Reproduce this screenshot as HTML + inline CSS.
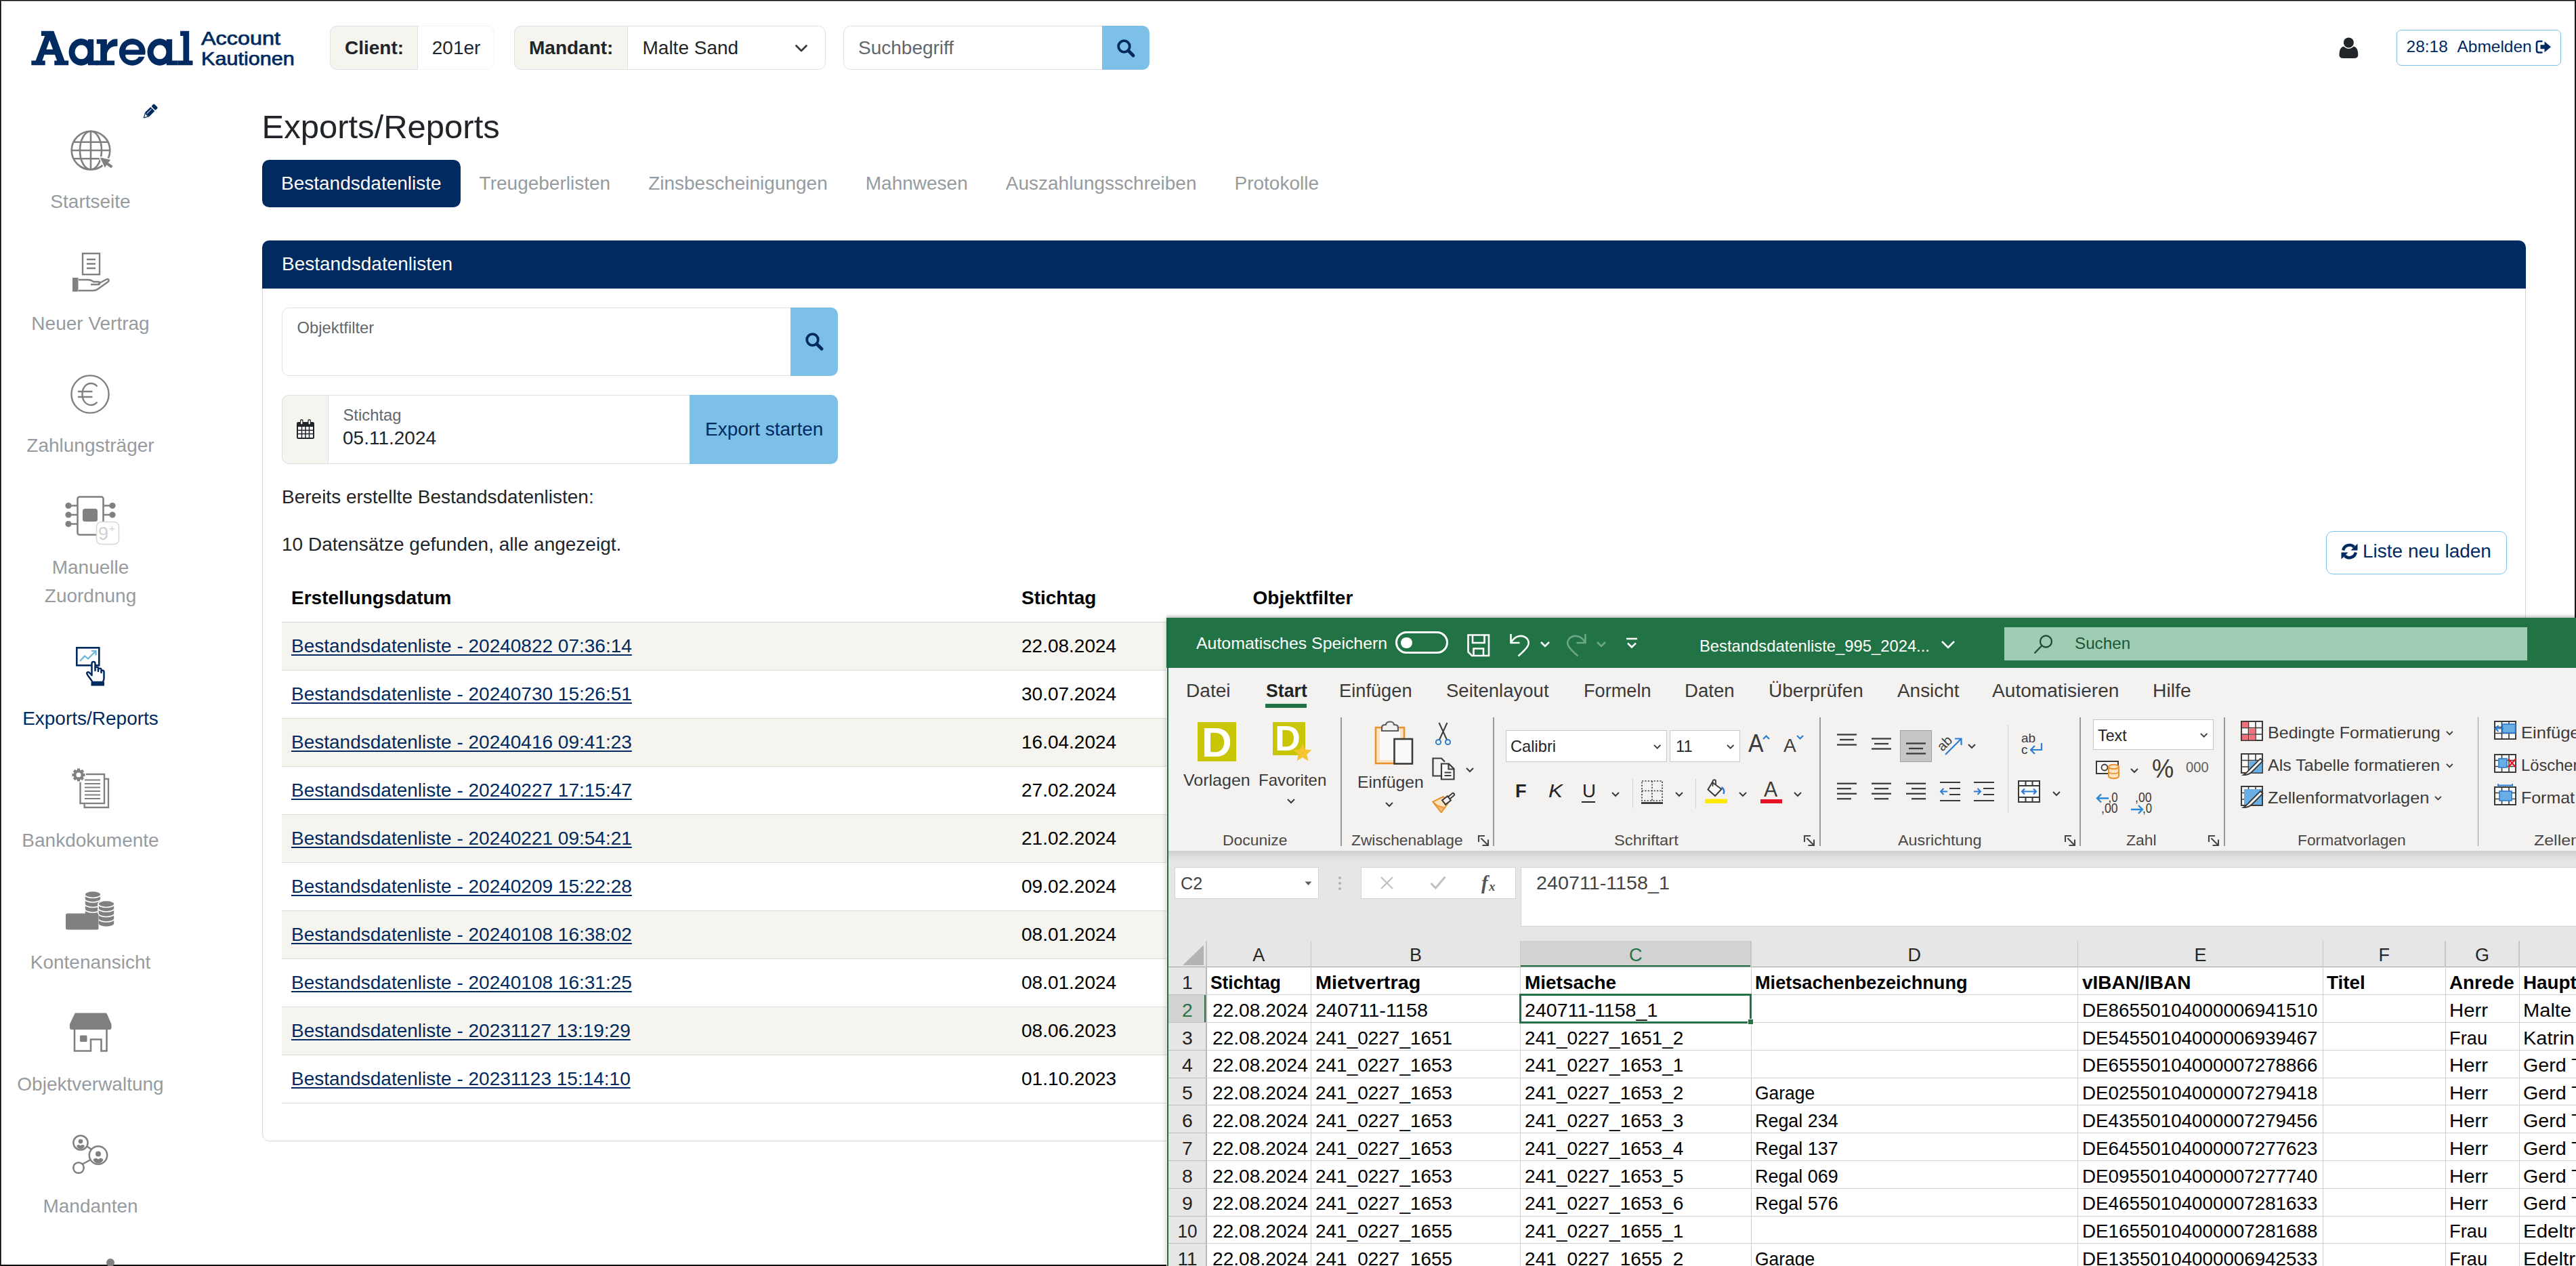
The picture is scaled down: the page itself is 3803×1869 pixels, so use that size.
<!DOCTYPE html>
<html lang="de"><head><meta charset="utf-8"><title>Exports/Reports</title>
<style>
html,body{margin:0;padding:0;background:#fff;}
body{width:3803px;height:1869px;}
#root{position:relative;width:3803px;height:1869px;overflow:hidden;background:#fff;font-family:"Liberation Sans",sans-serif;}
.b{position:absolute;box-sizing:border-box;display:block;}
.t{position:absolute;white-space:nowrap;line-height:1;font-family:"Liberation Sans",sans-serif;}
svg{overflow:visible;}
a{color:inherit;}
</style></head><body><div id="root">
<div class="b" style="left:0.00px;top:0.00px;width:3803.00px;height:2.00px;background:linear-gradient(#000 50%,#8c8c8c 50%);"></div>
<div class="b" style="left:0.00px;top:0.00px;width:2.00px;height:1869.00px;background:linear-gradient(90deg,#000 50%,#5a5a5a 50%);"></div>
<div class="b" style="left:3800.50px;top:0.00px;width:2.50px;height:912.00px;background:#1a1a1a;"></div>
<div class="b" style="left:0.00px;top:1866.50px;width:1723.00px;height:2.50px;background:#0a0a0a;"></div>
<svg class="b" style="left:40.00px;top:40.00px;" width="250.00" height="62.00" viewBox="0 0 2576 639">
<g fill="#002a60" fill-rule="evenodd">
<path d="M65,580V510H130L270,135H215V60H405L570,510H630V580H415V510H455L422,420H262L232,510H275V580Z M292,340H393L342,200Z"/>
<path d="M822,175a188,205 0 1 0 0.1,0Z M825,272a98,108 0 1 1 -0.1,0Z"/>
<path d="M925,185H1012V510H1078V580H925Z"/>
<path d="M1058,185H1215V275C1250,205 1310,170 1375,182V292C1300,280 1240,320 1215,400V510H1330V580H1050V510H1115V255H1058Z"/>
<path d="M1600,175a200,205 0 1 0 0.1,0Z M1497,345a104,82 0 0 1 208,0Z"/>
<path d="M2017,175a188,205 0 1 0 0.1,0Z M2020,272a98,108 0 1 1 -0.1,0Z"/>
<path d="M2120,185H2207V510H2290V580H2120Z"/>
<path d="M2330,60H2465V510H2520V580H2290V510H2375V135H2330Z"/>
</g>
<path d="M1497,420H1815V450H1698A102,70 0 0 1 1497,420Z" fill="#fff"/>
</svg>
<div class="t" style="left:296.80px;top:43.32px;font-size:27.50px;color:#002a60;transform-origin:0 50%;transform:scaleX(1.1778);-webkit-text-stroke:0.75px #002a60;">Account</div>
<div class="t" style="left:296.80px;top:72.72px;font-size:27.50px;color:#002a60;transform-origin:0 50%;transform:scaleX(1.1129);-webkit-text-stroke:0.75px #002a60;">Kautionen</div>
<div class="b" style="left:487.00px;top:38.00px;width:243.00px;height:64.50px;background:#fff;border:1px solid #dee2e6;border-radius:10.5px;border-color:#f4f4f4;"></div>
<div class="b" style="left:487.00px;top:38.00px;width:130.00px;height:64.50px;background:#f5f4ee;border:1px solid #dee2e6;border-radius:10.5px 0 0 10.5px;"></div>
<div class="t" style="left:509.00px;top:56.60px;font-size:28.00px;color:#212529;font-weight:700;">Client:</div>
<div class="t" style="left:637.80px;top:56.60px;font-size:28.00px;color:#212529;">201er</div>
<div class="b" style="left:759.00px;top:38.00px;width:459.50px;height:64.50px;background:#fff;border:1px solid #dee2e6;border-radius:10.5px;"></div>
<div class="b" style="left:759.00px;top:38.00px;width:168.00px;height:64.50px;background:#f5f4ee;border:1px solid #dee2e6;border-radius:10.5px 0 0 10.5px;"></div>
<div class="t" style="left:781.00px;top:56.60px;font-size:28.00px;color:#212529;font-weight:700;">Mandant:</div>
<div class="t" style="left:948.50px;top:56.60px;font-size:28.00px;color:#212529;">Malte Sand</div>
<svg class="b" style="left:1173.80px;top:65.50px;" width="18.00" height="11.00" viewBox="0 0 18 11"><path d="M1.500 1.500L9 9L16.500 1.500" fill="none" stroke="#343a40" stroke-width="2.800" stroke-linecap="round" stroke-linejoin="round"/></svg>
<div class="b" style="left:1245.00px;top:38.00px;width:451.50px;height:64.50px;background:#fff;border:1px solid #dee2e6;border-radius:10.5px;"></div>
<div class="b" style="left:1627.00px;top:38.00px;width:69.50px;height:64.50px;background:#7cc0e8;border-radius:0 10.5px 10.5px 0;"></div>
<div class="t" style="left:1267.00px;top:56.60px;font-size:28.00px;color:#62676c;">Suchbegriff</div>
<svg class="b" style="left:1649.00px;top:57.50px;" width="26.00" height="26.00" viewBox="0 0 26 26"><circle cx="10.500" cy="10.500" r="8.300" fill="none" stroke="#002a60" stroke-width="3.800"/><path d="M17 17L24 24" stroke="#002a60" stroke-width="4.800" stroke-linecap="round"/></svg>
<svg class="b" style="left:3452.50px;top:55.20px;" width="28.80" height="31.40" viewBox="0 0 28.8 31.4"><path d="M0.500 26.300C0.500 19 2.500 14.300 7.500 13.600H21.300C26.300 14.300 28.300 19 28.300 26.300C28.300 29.300 26 31 23 31H5.800C2.800 31 0.500 29.300 0.500 26.300Z" fill="#212529"/><circle cx="14.400" cy="7.900" r="9.100" fill="#fff"/><circle cx="14.400" cy="7.900" r="7.500" fill="#212529"/></svg>
<div class="b" style="left:3538.00px;top:44.40px;width:242.50px;height:52.60px;background:#fff;border:1px solid #7cc0e8;border-radius:7px;"></div>
<div class="t" style="left:3552.50px;top:56.86px;font-size:24.50px;color:#002a60;">28:18  Abmelden</div>
<svg class="b" style="left:3743.50px;top:60.00px;" width="22.50" height="18.50" viewBox="0 0 22.5 18.5"><path d="M8.5 1H4C2 1 1 2 1 4V14.5C1 16.5 2 17.5 4 17.5H8.5" fill="none" stroke="#002a60" stroke-width="2.6" stroke-linecap="round"/><path d="M6.5 6.2H12.5V1.2L22 9.25L12.5 17.3V12.3H6.5Z" fill="#002a60"/></svg>
<svg class="b" style="left:212.00px;top:152.80px;" width="21.30" height="21.30" viewBox="0 0 21.3 21.3"><g transform="translate(9.13 12.12) rotate(45)"><g fill="#002a60"><rect x="-4.300" y="-12.900" width="8.600" height="5.600" rx="1.700"/><rect x="-4.300" y="-5.900" width="8.600" height="11.600"/><path d="M-4.300 5.700H4.300L0.500 12.900H-0.500Z"/></g><path d="M-2.400 7H2.400L0 11Z" fill="#fff"/><rect x="-1.800" y="-4.800" width="1" height="9.600" fill="#fff" opacity="0.850"/></g></svg>
<svg class="b" style="left:103.50px;top:191.50px;" width="66.00" height="66.00" viewBox="0 0 66 66"><g fill="none" stroke="#808080" stroke-width="2.6"><circle cx="30" cy="30" r="28.3"/><ellipse cx="30" cy="30" rx="16" ry="28.3"/><path d="M30 1.500V58.500M1.700 30H58.300M4.500 17.800H55.500M4.500 42.200H55.500"/></g><path d="M43.800 40.500L59.200 44L55.800 48.300L62.500 53L60.200 56.300L53.300 51.600L50.800 55.500Z" fill="#808080" stroke="#fff" stroke-width="3" paint-order="stroke" stroke-linejoin="round"/></svg>
<div class="t" style="left:133.50px;top:283.80px;font-size:28.00px;color:#969ba0;transform:translateX(-50%);">Startseite</div>
<svg class="b" style="left:107.00px;top:372.50px;" width="54.00" height="58.00" viewBox="0 0 54 58"><g fill="none" stroke="#808080" stroke-width="2.4"><rect x="15" y="1.2" width="25" height="31"/><path d="M21 10H34M21 16.5H34M21 23H34"/><path d="M9 40H22C26 40 29 41 31 43H38C41 43 41 47 38 47H27M38 46L50 39.5C53 38 55 41 52.5 43L37 54C35 55.5 33 56 30 56H9"/></g><rect x="0" y="37" width="8.5" height="20.5" fill="#808080"/></svg>
<div class="t" style="left:133.50px;top:463.80px;font-size:28.00px;color:#969ba0;transform:translateX(-50%);">Neuer Vertrag</div>
<svg class="b" style="left:104.00px;top:552.50px;" width="58.00" height="58.00" viewBox="0 0 58 58"><g fill="none" stroke="#808080" stroke-width="2.4"><circle cx="29" cy="29" r="27.6"/><path d="M39.500 17.500C37 14.500 34 13 30.500 13C22.500 13 17.500 20 17.500 29C17.500 38 22.500 45 30.500 45C34 45 37 43.500 39.500 40.500M11 25H32.500M11 33H32.500"/></g></svg>
<div class="t" style="left:133.50px;top:644.30px;font-size:28.00px;color:#969ba0;transform:translateX(-50%);">Zahlungsträger</div>
<svg class="b" style="left:96.00px;top:731.50px;" width="82.00" height="74.00" viewBox="0 0 82 74"><g fill="none" stroke="#808080" stroke-width="2.6"><rect x="18.5" y="1.5" width="38" height="56" rx="3"/><path d="M5 14.5H18M5 28H18M5 41.5H18M57 14.5H70M57 28H70"/></g><g fill="#808080"><circle cx="5" cy="14.5" r="4.6"/><circle cx="5" cy="28" r="4.6"/><circle cx="5" cy="41.5" r="4.6"/><circle cx="70" cy="14.5" r="4.6"/><circle cx="70" cy="28" r="4.6"/><rect x="26" y="19" width="22" height="19" rx="3.5"/></g><rect x="46.5" y="38.5" width="33" height="33" rx="7" fill="#fff" stroke="#d8d8d8" stroke-width="1.6"/><text x="49" y="65" font-family="Liberation Sans, sans-serif" font-size="27" fill="#d0d0d0">9</text><text x="65" y="53" font-family="Liberation Sans, sans-serif" font-size="15" fill="#d0d0d0">+</text></svg>
<div class="t" style="left:133.50px;top:823.80px;font-size:28.00px;color:#969ba0;transform:translateX(-50%);">Manuelle</div>
<div class="t" style="left:133.50px;top:866.40px;font-size:28.00px;color:#969ba0;transform:translateX(-50%);">Zuordnung</div>
<svg class="b" style="left:112.00px;top:954.50px;" width="44.00" height="58.00" viewBox="0 0 44 58"><rect x="1.3" y="1.3" width="33" height="26" fill="#fff" stroke="#002a60" stroke-width="2.6"/><path d="M6 21L13 13.5L18 17.5L29 6.5M23 6H29.5V12.5" fill="none" stroke="#6fb3dc" stroke-width="2.2"/><path d="M23.5 42V24.5C23.5 21 28.5 21 28.5 24.5V35V31.5C28.5 29 33 29 33 31.5V36V33.5C33 31 37.5 31 37.5 33.5V38V36.5C37.5 34 41.5 34 41.5 37V46C41.5 49 40.5 50 40 52H24.5C22 47 18 43.5 16.5 40C15.5 37.5 18.5 36 20.5 38.5Z" fill="#fff" stroke="#002a60" stroke-width="2.5" stroke-linejoin="round"/><rect x="22.5" y="52" width="19.5" height="5.5" fill="#002a60"/></svg>
<div class="t" style="left:133.50px;top:1046.50px;font-size:28.00px;color:#002a60;transform:translateX(-50%);">Exports/Reports</div>
<svg class="b" style="left:106.00px;top:1134.00px;" width="62.00" height="64.00" viewBox="0 0 62 64"><g fill="none" stroke="#808080" stroke-width="2.4"><path d="M18.6 52V58H54V16H48"/><rect x="12.5" y="9" width="35.5" height="43" fill="#fff"/><path d="M19 17.500H42M19 23H42M19 28.500H42M19 34H42M19 39.500H42M19 45H42" stroke-width="2"/></g><circle cx="10" cy="10" r="11" fill="#fff"/><circle cx="10" cy="10" r="5.600" fill="none" stroke="#808080" stroke-width="4"/><g stroke="#808080" stroke-width="4.200"><path d="M10 0.500V19.500M0.500 10H19.500M3.300 3.300L16.700 16.700M16.700 3.300L3.300 16.700" stroke-dasharray="3.400 12.200"/></g><circle cx="10" cy="10" r="2.800" fill="#fff"/></svg>
<div class="t" style="left:133.50px;top:1226.60px;font-size:28.00px;color:#969ba0;transform:translateX(-50%);">Bankdokumente</div>
<svg class="b" style="left:97.00px;top:1314.50px;" width="74.00" height="58.00" viewBox="0 0 74 58"><path d="M28 35.5v6.5a12 5 0 0 0 24 0v-6.5" fill="#808080" stroke="#fff" stroke-width="1.6"/><path d="M28 28v6.5a12 5 0 0 0 24 0v-6.5" fill="#808080" stroke="#fff" stroke-width="1.6"/><path d="M28 20.5v6.5a12 5 0 0 0 24 0v-6.5" fill="#808080" stroke="#fff" stroke-width="1.6"/><path d="M28 13v6.5a12 5 0 0 0 24 0v-6.5" fill="#808080" stroke="#fff" stroke-width="1.6"/><path d="M28 5.5v6.5a12 5 0 0 0 24 0v-6.5" fill="#808080" stroke="#fff" stroke-width="1.6"/><ellipse cx="40" cy="5.5" rx="12" ry="5" fill="#808080" stroke="#fff" stroke-width="1.6"/><path d="M48 42v6.5a12 5 0 0 0 24 0v-6.5" fill="#808080" stroke="#fff" stroke-width="1.6"/><path d="M48 34.5v6.5a12 5 0 0 0 24 0v-6.5" fill="#808080" stroke="#fff" stroke-width="1.6"/><path d="M48 27v6.5a12 5 0 0 0 24 0v-6.5" fill="#808080" stroke="#fff" stroke-width="1.6"/><path d="M48 19.5v6.5a12 5 0 0 0 24 0v-6.5" fill="#808080" stroke="#fff" stroke-width="1.6"/><ellipse cx="60" cy="19.5" rx="12" ry="5" fill="#808080" stroke="#fff" stroke-width="1.6"/><rect x="0" y="33.5" width="48.5" height="24" rx="2.5" fill="#808080"/></svg>
<div class="t" style="left:133.50px;top:1406.50px;font-size:28.00px;color:#969ba0;transform:translateX(-50%);">Kontenansicht</div>
<svg class="b" style="left:103.00px;top:1495.00px;" width="62.00" height="58.00" viewBox="0 0 62 58"><path d="M9 0.5H53C54 0.5 54.5 1 55 2L61.5 17V22.5C61.5 24 60.5 25 59 25H2.5C1 25 0 24 0 22.5V17L7 2C7.5 1 8 0.5 9 0.5Z" fill="#808080"/><path d="M7 25V56.5H31V39.5H46.5V56.5H54.5V25" fill="none" stroke="#808080" stroke-width="2.6"/><rect x="15" y="33.5" width="10.5" height="9.5" rx="1.5" fill="#808080"/></svg>
<div class="t" style="left:133.50px;top:1586.80px;font-size:28.00px;color:#969ba0;transform:translateX(-50%);">Objektverwaltung</div>
<svg class="b" style="left:107.00px;top:1675.00px;" width="54.00" height="58.00" viewBox="0 0 54 58"><g fill="none" stroke="#808080" stroke-width="2.5"><path d="M21 17L28 22M14 44L27 37"/><circle cx="12" cy="12" r="10.6" fill="#fff"/><circle cx="38" cy="30.5" r="13.2" fill="#fff"/><circle cx="9" cy="49" r="7.8" fill="#fff"/></g><g fill="#808080"><circle cx="12" cy="10" r="3.3"/><path d="M6 17C8 14.5 9.5 14.5 12 16.5C14.5 14.5 16 14.5 18 17C16.5 20 14.5 21.3 12 21.3C9.500 21.3 7.5 20 6 17Z"/><circle cx="38" cy="28.5" r="4"/><path d="M30.500 37C33 34 35 34 38 36.500C41 34 43 34 45.500 37C44 41 41 42.500 38 42.500C35 42.500 32 41 30.500 37Z"/></g></svg>
<div class="t" style="left:133.50px;top:1766.80px;font-size:28.00px;color:#969ba0;transform:translateX(-50%);">Mandanten</div>
<div class="b" style="left:156.5px;top:1858px;width:12px;height:12px;border-radius:50%;background:#808080;"></div>
<div class="t" style="left:386.50px;top:162.72px;font-size:49.00px;color:#212529;">Exports/Reports</div>
<div class="b" style="left:387px;top:236px;height:69.5px;display:flex;white-space:nowrap;font-size:28px;line-height:69.5px;color:#969ba0;">
<span style="display:block;padding:0 28px;height:69.5px;background:#002a60;color:#fff;border-radius:10.5px;">Bestandsdatenliste</span>
<span style="display:block;padding:0 28px;height:69.5px;">Treugeberlisten</span>
<span style="display:block;padding:0 28px;height:69.5px;">Zinsbescheinigungen</span>
<span style="display:block;padding:0 28px;height:69.5px;">Mahnwesen</span>
<span style="display:block;padding:0 28px;height:69.5px;">Auszahlungsschreiben</span>
<span style="display:block;padding:0 28px;height:69.5px;">Protokolle</span>
</div>
<div class="b" style="left:387.00px;top:354.50px;width:3341.50px;height:1330.50px;background:#fff;border:1px solid #d6d6d6;border-radius:10.5px;"></div>
<div class="b" style="left:387.00px;top:354.50px;width:3341.50px;height:71.00px;background:#002a60;border-radius:10.5px 10.5px 0 0;"></div>
<div class="t" style="left:416.00px;top:375.50px;font-size:28.00px;color:#fff;">Bestandsdatenlisten</div>
<div class="b" style="left:416.00px;top:454.00px;width:821.00px;height:100.50px;background:#fff;border:1px solid #dee2e6;border-radius:10.5px;"></div>
<div class="b" style="left:1167.00px;top:454.00px;width:70.00px;height:100.50px;background:#7cc0e8;border-radius:0 10.5px 10.5px 0;"></div>
<div class="t" style="left:438.50px;top:472.15px;font-size:23.80px;color:#62676c;">Objektfilter</div>
<svg class="b" style="left:1188.50px;top:491.00px;" width="26.00" height="26.00" viewBox="0 0 26 26"><circle cx="10.500" cy="10.500" r="8.300" fill="none" stroke="#002a60" stroke-width="3.800"/><path d="M17 17L24 24" stroke="#002a60" stroke-width="4.800" stroke-linecap="round"/></svg>
<div class="b" style="left:416.00px;top:583.00px;width:821.00px;height:101.50px;background:#fff;border:1px solid #dee2e6;border-radius:10.5px;"></div>
<div class="b" style="left:416.00px;top:583.00px;width:69.00px;height:101.50px;background:#f5f4ee;border:1px solid #dee2e6;border-radius:10.5px 0 0 10.5px;"></div>
<div class="b" style="left:1018.00px;top:583.00px;width:219.00px;height:101.50px;background:#7cc0e8;border-radius:0 10.5px 10.5px 0;"></div>
<svg class="b" style="left:437.50px;top:619.00px;" width="26.00" height="29.00" viewBox="0 0 26 29"><g fill="#212529"><rect x="0" y="4" width="26" height="25" rx="2.2"/><rect x="5" y="0" width="4.6" height="9" rx="2"/><rect x="16.400" y="0" width="4.600" height="9" rx="2"/></g><g fill="#fff"><rect x="2" y="11" width="22" height="16"/><rect x="6.200" y="1.600" width="2.200" height="5.600" rx="1"/><rect x="17.600" y="1.600" width="2.200" height="5.600" rx="1"/></g><g stroke="#212529" stroke-width="1.5"><path d="M2 16.300H24M2 21.600H24M7.500 11V27M13 11V27M18.500 11V27"/></g></svg>
<div class="t" style="left:506.50px;top:601.35px;font-size:23.80px;color:#62676c;">Stichtag</div>
<div class="t" style="left:506.00px;top:632.90px;font-size:28.00px;color:#212529;">05.11.2024</div>
<div class="t" style="left:1041.00px;top:619.80px;font-size:28.00px;color:#002a60;">Export starten</div>
<div class="t" style="left:416.00px;top:719.70px;font-size:28.00px;color:#212529;">Bereits erstellte Bestandsdatenlisten:</div>
<div class="t" style="left:416.00px;top:790.30px;font-size:28.00px;color:#212529;">10 Datensätze gefunden, alle angezeigt.</div>
<div class="b" style="left:3434.00px;top:783.50px;width:266.50px;height:64.00px;background:#fff;border:1px solid #7cc0e8;border-radius:10.5px;"></div>
<svg class="b" style="left:3455.50px;top:802.00px;" width="25.00" height="24.00" viewBox="0 0 25 24"><g fill="none" stroke="#002a60" stroke-width="4.4"><path d="M3.2 10.500A9.600 9.600 0 0 1 19.500 5.600"/><path d="M21.800 13.500A9.600 9.600 0 0 1 5.500 18.400"/></g><path d="M24.500 0.500V10.500H14.500Z M0.500 23.500V13.500H10.500Z" fill="#002a60"/></svg>
<div class="t" style="left:3488.00px;top:800.10px;font-size:28.00px;color:#002a60;">Liste neu laden</div>
<div class="t" style="left:430.00px;top:869.30px;font-size:28.00px;color:#000;font-weight:700;">Erstellungsdatum</div>
<div class="t" style="left:1508.00px;top:869.30px;font-size:28.00px;color:#000;font-weight:700;">Stichtag</div>
<div class="t" style="left:1849.50px;top:869.30px;font-size:28.00px;color:#000;font-weight:700;">Objektfilter</div>
<div class="b" style="left:416.00px;top:917.70px;width:3283.50px;height:1.00px;background:#d4d4d2;"></div>
<div class="b" style="left:416.00px;top:918.70px;width:3283.50px;height:70.00px;background:#f5f4ee;"></div>
<div class="b" style="left:416.00px;top:988.70px;width:3283.50px;height:1.00px;background:#dcdcda;"></div>
<div class="t" style="left:430.00px;top:939.60px;font-size:28.00px;color:#002a60;text-decoration:underline;text-decoration-thickness:2px;text-underline-offset:3px;">Bestandsdatenliste - 20240822 07:36:14</div>
<div class="t" style="left:1508.00px;top:939.60px;font-size:28.00px;color:#000;">22.08.2024</div>
<div class="b" style="left:416.00px;top:1059.70px;width:3283.50px;height:1.00px;background:#dcdcda;"></div>
<div class="t" style="left:430.00px;top:1010.60px;font-size:28.00px;color:#002a60;text-decoration:underline;text-decoration-thickness:2px;text-underline-offset:3px;">Bestandsdatenliste - 20240730 15:26:51</div>
<div class="t" style="left:1508.00px;top:1010.60px;font-size:28.00px;color:#000;">30.07.2024</div>
<div class="b" style="left:416.00px;top:1060.70px;width:3283.50px;height:70.00px;background:#f5f4ee;"></div>
<div class="b" style="left:416.00px;top:1130.70px;width:3283.50px;height:1.00px;background:#dcdcda;"></div>
<div class="t" style="left:430.00px;top:1081.60px;font-size:28.00px;color:#002a60;text-decoration:underline;text-decoration-thickness:2px;text-underline-offset:3px;">Bestandsdatenliste - 20240416 09:41:23</div>
<div class="t" style="left:1508.00px;top:1081.60px;font-size:28.00px;color:#000;">16.04.2024</div>
<div class="b" style="left:416.00px;top:1201.70px;width:3283.50px;height:1.00px;background:#dcdcda;"></div>
<div class="t" style="left:430.00px;top:1152.60px;font-size:28.00px;color:#002a60;text-decoration:underline;text-decoration-thickness:2px;text-underline-offset:3px;">Bestandsdatenliste - 20240227 17:15:47</div>
<div class="t" style="left:1508.00px;top:1152.60px;font-size:28.00px;color:#000;">27.02.2024</div>
<div class="b" style="left:416.00px;top:1202.70px;width:3283.50px;height:70.00px;background:#f5f4ee;"></div>
<div class="b" style="left:416.00px;top:1272.70px;width:3283.50px;height:1.00px;background:#dcdcda;"></div>
<div class="t" style="left:430.00px;top:1223.60px;font-size:28.00px;color:#002a60;text-decoration:underline;text-decoration-thickness:2px;text-underline-offset:3px;">Bestandsdatenliste - 20240221 09:54:21</div>
<div class="t" style="left:1508.00px;top:1223.60px;font-size:28.00px;color:#000;">21.02.2024</div>
<div class="b" style="left:416.00px;top:1343.70px;width:3283.50px;height:1.00px;background:#dcdcda;"></div>
<div class="t" style="left:430.00px;top:1294.60px;font-size:28.00px;color:#002a60;text-decoration:underline;text-decoration-thickness:2px;text-underline-offset:3px;">Bestandsdatenliste - 20240209 15:22:28</div>
<div class="t" style="left:1508.00px;top:1294.60px;font-size:28.00px;color:#000;">09.02.2024</div>
<div class="b" style="left:416.00px;top:1344.70px;width:3283.50px;height:70.00px;background:#f5f4ee;"></div>
<div class="b" style="left:416.00px;top:1414.70px;width:3283.50px;height:1.00px;background:#dcdcda;"></div>
<div class="t" style="left:430.00px;top:1365.60px;font-size:28.00px;color:#002a60;text-decoration:underline;text-decoration-thickness:2px;text-underline-offset:3px;">Bestandsdatenliste - 20240108 16:38:02</div>
<div class="t" style="left:1508.00px;top:1365.60px;font-size:28.00px;color:#000;">08.01.2024</div>
<div class="b" style="left:416.00px;top:1485.70px;width:3283.50px;height:1.00px;background:#dcdcda;"></div>
<div class="t" style="left:430.00px;top:1436.60px;font-size:28.00px;color:#002a60;text-decoration:underline;text-decoration-thickness:2px;text-underline-offset:3px;">Bestandsdatenliste - 20240108 16:31:25</div>
<div class="t" style="left:1508.00px;top:1436.60px;font-size:28.00px;color:#000;">08.01.2024</div>
<div class="b" style="left:416.00px;top:1486.70px;width:3283.50px;height:70.00px;background:#f5f4ee;"></div>
<div class="b" style="left:416.00px;top:1556.70px;width:3283.50px;height:1.00px;background:#dcdcda;"></div>
<div class="t" style="left:430.00px;top:1507.60px;font-size:28.00px;color:#002a60;text-decoration:underline;text-decoration-thickness:2px;text-underline-offset:3px;">Bestandsdatenliste - 20231127 13:19:29</div>
<div class="t" style="left:1508.00px;top:1507.60px;font-size:28.00px;color:#000;">08.06.2023</div>
<div class="b" style="left:416.00px;top:1627.70px;width:3283.50px;height:1.00px;background:#dcdcda;"></div>
<div class="t" style="left:430.00px;top:1578.60px;font-size:28.00px;color:#002a60;text-decoration:underline;text-decoration-thickness:2px;text-underline-offset:3px;">Bestandsdatenliste - 20231123 15:14:10</div>
<div class="t" style="left:1508.00px;top:1578.60px;font-size:28.00px;color:#000;">01.10.2023</div>
<div class="b" style="left:1722.00px;top:912.00px;width:2101.00px;height:977.00px;background:#f3f2f1;box-shadow:0 0 7px 0 rgba(0,0,0,.22);"></div>
<div class="b" style="left:1722.00px;top:906.00px;width:2081.00px;height:6.00px;background:linear-gradient(rgba(0,0,0,0),rgba(0,0,0,.12));"></div>
<div class="b" style="left:1722.00px;top:912.00px;width:2081.00px;height:74.00px;background:#217346;"></div>
<div class="b" style="left:1722.50px;top:912.00px;width:2.50px;height:957.00px;background:#1e6b41;"></div>
<div class="t" style="left:1766.00px;top:937.68px;font-size:24.00px;color:#fff;transform-origin:0 50%;transform:scaleX(1.0368);">Automatisches Speichern</div>
<div class="b" style="left:2060.00px;top:932.00px;width:78.00px;height:32.50px;border:3px solid #fff;border-radius:17px;"></div>
<div class="b" style="left:2068.00px;top:940.50px;width:16.50px;height:16.50px;background:#fff;border-radius:50%;"></div>
<svg class="b" style="left:2165.50px;top:936.00px;" width="33.50" height="33.50" viewBox="0 0 33.5 33.5"><path d="M1.5 1.5H32V32H7L1.5 26.500Z M8 1.500V13H25.500V1.500 M9.500 32V21.500H24V32" fill="none" stroke="#fff" stroke-width="2.6"/></svg>
<svg class="b" style="left:2228.00px;top:934.00px;" width="32.00" height="36.00" viewBox="0 0 32 36"><path d="M2.500 2V15H15.500 M3 14.500C8 4 20 2 26.500 9C32 16 28 22 13.500 34.500" fill="none" stroke="#fff" stroke-width="2.6"/></svg>
<svg class="b" style="left:2273.00px;top:946.00px;" width="16.00" height="10.00" viewBox="0 0 16 10"><path d="M2 2L8 8L14 2" fill="none" stroke="#fff" stroke-width="2.6"/></svg>
<svg class="b" style="left:2311.00px;top:934.00px;" width="32.00" height="36.00" viewBox="0 0 32 36"><path d="M29.500 2V15H16.500 M29 14.500C24 4 12 2 5.500 9C0 16 4 22 18.500 34.500" fill="none" stroke="#6fa588" stroke-width="2.6"/></svg>
<svg class="b" style="left:2356.00px;top:946.00px;" width="16.00" height="10.00" viewBox="0 0 16 10"><path d="M2 2L8 8L14 2" fill="none" stroke="#6fa588" stroke-width="2.6"/></svg>
<svg class="b" style="left:2400.00px;top:941.00px;" width="18.00" height="18.00" viewBox="0 0 18 18"><path d="M1 2H17 M3 8.500L9 14.500L15 8.500" fill="none" stroke="#fff" stroke-width="2.6"/></svg>
<div class="t" style="left:2508.60px;top:941.88px;font-size:24.00px;color:#fff;transform-origin:0 50%;transform:scaleX(0.9913);">Bestandsdatenliste_995_2024...</div>
<svg class="b" style="left:2865.00px;top:945.00px;" width="22.00" height="14.00" viewBox="0 0 22 14"><path d="M2 2L11 11L20 2" fill="none" stroke="#fff" stroke-width="2.6"/></svg>
<div class="b" style="left:2959.00px;top:925.50px;width:772.00px;height:49.50px;background:#9fcdb3;"></div>
<svg class="b" style="left:3002.00px;top:936.00px;" width="30.00" height="30.00" viewBox="0 0 30 30"><circle cx="18.500" cy="11" r="8.500" fill="none" stroke="#1e4e33" stroke-width="2.400"/><path d="M12.500 17L1.500 28.500" stroke="#1e4e33" stroke-width="2.400"/></svg>
<div class="t" style="left:3063.00px;top:938.26px;font-size:24.50px;color:#1b5735;transform-origin:0 50%;transform:scaleX(0.9880);">Suchen</div>
<div class="t" style="left:1751.00px;top:1006.74px;font-size:27.00px;color:#3b3a39;transform-origin:0 50%;transform:scaleX(1.0397);">Datei</div>
<div class="t" style="left:1868.75px;top:1006.74px;font-size:27.00px;color:#252423;font-weight:700;transform-origin:0 50%;transform:scaleX(0.9879);">Start</div>
<div class="t" style="left:1977.00px;top:1006.74px;font-size:27.00px;color:#3b3a39;transform-origin:0 50%;transform:scaleX(1.0093);">Einfügen</div>
<div class="t" style="left:2134.50px;top:1006.74px;font-size:27.00px;color:#3b3a39;transform-origin:0 50%;transform:scaleX(1.0201);">Seitenlayout</div>
<div class="t" style="left:2337.90px;top:1006.74px;font-size:27.00px;color:#3b3a39;transform-origin:0 50%;transform:scaleX(1.0051);">Formeln</div>
<div class="t" style="left:2487.20px;top:1006.74px;font-size:27.00px;color:#3b3a39;transform-origin:0 50%;transform:scaleX(1.0222);">Daten</div>
<div class="t" style="left:2610.70px;top:1006.74px;font-size:27.00px;color:#3b3a39;transform-origin:0 50%;transform:scaleX(1.0348);">Überprüfen</div>
<div class="t" style="left:2800.60px;top:1006.74px;font-size:27.00px;color:#3b3a39;transform-origin:0 50%;transform:scaleX(1.0337);">Ansicht</div>
<div class="t" style="left:2940.60px;top:1006.74px;font-size:27.00px;color:#3b3a39;transform-origin:0 50%;transform:scaleX(1.0411);">Automatisieren</div>
<div class="t" style="left:3178.30px;top:1006.74px;font-size:27.00px;color:#3b3a39;transform-origin:0 50%;transform:scaleX(1.0500);">Hilfe</div>
<div class="b" style="left:1868.00px;top:1039.00px;width:61.00px;height:5.50px;background:#217346;"></div>
<div class="b" style="left:1979.20px;top:1058.50px;width:1.80px;height:190.00px;background:#9b9997;"></div>
<div class="b" style="left:2204.00px;top:1058.50px;width:1.80px;height:190.00px;background:#9b9997;"></div>
<div class="b" style="left:2686.00px;top:1058.50px;width:1.80px;height:190.00px;background:#9b9997;"></div>
<div class="b" style="left:3070.00px;top:1058.50px;width:1.80px;height:190.00px;background:#9b9997;"></div>
<div class="b" style="left:3283.20px;top:1058.50px;width:1.80px;height:190.00px;background:#9b9997;"></div>
<div class="b" style="left:3657.50px;top:1058.50px;width:1.80px;height:190.00px;background:#9b9997;"></div>
<div class="b" style="left:2410.00px;top:1150.00px;width:1.20px;height:43.00px;background:#d2d0ce;"></div>
<div class="b" style="left:2503.00px;top:1150.00px;width:1.20px;height:43.00px;background:#d2d0ce;"></div>
<div class="b" style="left:2964.00px;top:1070.00px;width:1.20px;height:130.00px;background:#d2d0ce;"></div>
<div class="b" style="left:1767.50px;top:1066.00px;width:57.50px;height:57.50px;background:#c9c608;"></div>
<div class="t" style="left:1796.50px;top:1065.02px;font-size:62.00px;color:#fff;font-weight:700;transform:translateX(-50%);">D</div>
<div class="b" style="left:1878.70px;top:1066.00px;width:48.80px;height:49.00px;background:#c9c608;"></div>
<div class="t" style="left:1901.00px;top:1063.98px;font-size:52.00px;color:#fff;font-weight:700;transform:translateX(-50%);">D</div>
<svg class="b" style="left:1909.00px;top:1097.00px;" width="28.00" height="27.00" viewBox="0 0 28 27"><path d="M14 0.500L17.800 9.500L27.500 10.300L20.200 16.800L22.400 26.300L14 21.300L5.600 26.300L7.800 16.800L0.500 10.300L10.200 9.500Z" fill="#f5c431"/></svg>
<div class="t" style="left:1747.00px;top:1139.98px;font-size:24.00px;color:#3b3a39;transform-origin:0 50%;transform:scaleX(1.0421);">Vorlagen</div>
<div class="t" style="left:1858.00px;top:1139.98px;font-size:24.00px;color:#3b3a39;transform-origin:0 50%;transform:scaleX(1.0030);">Favoriten</div>
<svg class="b" style="left:1900.00px;top:1179.00px;" width="12.00" height="7.00" viewBox="0 0 12 7"><path d="M1 1L6 6L11 1" fill="none" stroke="#3b3a39" stroke-width="2"/></svg>
<div class="t" style="left:1805.00px;top:1229.68px;font-size:22.00px;color:#4a4847;transform-origin:0 50%;transform:scaleX(1.0413);">Docunize</div>
<svg class="b" style="left:2028.50px;top:1065.00px;" width="58.00" height="65.00" viewBox="0 0 58 65"><path d="M2 9H44V62H2Z" fill="#fbe3c4" stroke="#e8912d" stroke-width="2.600"/><path d="M8 14H38V57H8Z" fill="#fafafa"/><path d="M11 14V9C11 6 13 5 16 5H17C17 -1 29 -1 29 5H30C33 5 35 6 35 9V14Z" fill="#f3f2f1" stroke="#605e5c" stroke-width="2.200"/><rect x="29.500" y="26" width="26.500" height="36.500" fill="#fafafa" stroke="#3b3a39" stroke-width="2.600"/></svg>
<div class="t" style="left:2004.00px;top:1142.98px;font-size:24.00px;color:#3b3a39;transform-origin:0 50%;transform:scaleX(1.0316);">Einfügen</div>
<svg class="b" style="left:2045.00px;top:1183.50px;" width="12.00" height="7.00" viewBox="0 0 12 7"><path d="M1 1L6 6L11 1" fill="none" stroke="#3b3a39" stroke-width="2"/></svg>
<svg class="b" style="left:2119.00px;top:1066.00px;" width="23.00" height="35.00" viewBox="0 0 23 35"><path d="M5.500 1L17 26 M17.500 1L6 26" fill="none" stroke="#3b3a39" stroke-width="2"/><circle cx="4.500" cy="29.500" r="3.600" fill="none" stroke="#2b7cd3" stroke-width="2"/><circle cx="18.500" cy="29.500" r="3.600" fill="none" stroke="#2b7cd3" stroke-width="2"/></svg>
<svg class="b" style="left:2113.50px;top:1118.00px;" width="34.00" height="34.00" viewBox="0 0 34 34"><path d="M13 27.500H1.500V1.500H14L19 6.500" fill="none" stroke="#3b3a39" stroke-width="2.200"/><path d="M14 9.500H25L32.500 17V32.500H14Z M24.500 9.500V17.500H32.500" fill="#fafafa" stroke="#3b3a39" stroke-width="2.200"/><path d="M18.500 22.500H28.500 M18.500 27H28.500" stroke="#3b3a39" stroke-width="1.800"/></svg>
<svg class="b" style="left:2164.00px;top:1132.50px;" width="12.00" height="7.00" viewBox="0 0 12 7"><path d="M1 1L6 6L11 1" fill="none" stroke="#3b3a39" stroke-width="2"/></svg>
<svg class="b" style="left:2114.00px;top:1170.00px;" width="34.00" height="31.00" viewBox="0 0 34 31"><path d="M1.300 13.600L17 6L23.700 16L13.700 29.300Z" fill="#fce3c4" stroke="#e8912d" stroke-width="2" stroke-linejoin="round"/><path d="M1.300 13.600L13.700 29.300L19 22.500L8.500 19.500Z" fill="#f6b871" stroke="#e8912d" stroke-width="1.400" stroke-linejoin="round"/><path d="M24.500 8.500L31 3" stroke="#3b3a39" stroke-width="6" stroke-linecap="round"/><path d="M24.500 8.500L31 3" stroke="#f3f2f1" stroke-width="2.200" stroke-linecap="round"/><g transform="rotate(-38 21.500 11.500)"><rect x="16.500" y="7.500" width="10" height="8" fill="#f3f2f1" stroke="#3b3a39" stroke-width="2"/></g></svg>
<div class="t" style="left:1995.00px;top:1229.68px;font-size:22.00px;color:#4a4847;transform-origin:0 50%;transform:scaleX(1.0352);">Zwischenablage</div>
<svg class="b" style="left:2181.50px;top:1233.00px;" width="16.00" height="16.00" viewBox="0 0 16 16"><path d="M1 10V1H10 M4.500 4.500L15 15 M15 6.500V15H6.500" fill="none" stroke="#484644" stroke-width="2.100"/></svg>
<div class="b" style="left:2223.00px;top:1078.00px;width:237.50px;height:46.50px;background:#fff;border:1.500px solid #c8c6c4;"></div>
<div class="t" style="left:2230.00px;top:1089.68px;font-size:24.00px;color:#252423;transform-origin:0 50%;transform:scaleX(0.9853);">Calibri</div>
<svg class="b" style="left:2440.80px;top:1098.92px;" width="11.40" height="6.65" viewBox="0 0 12 7"><path d="M1 1L6 6L11 1" fill="none" stroke="#3b3a39" stroke-width="2"/></svg>
<div class="b" style="left:2465.00px;top:1078.00px;width:104.00px;height:46.50px;background:#fff;border:1.500px solid #c8c6c4;"></div>
<div class="t" style="left:2473.50px;top:1089.68px;font-size:24.00px;color:#252423;transform-origin:0 50%;transform:scaleX(0.9840);">11</div>
<svg class="b" style="left:2549.30px;top:1098.92px;" width="11.40" height="6.65" viewBox="0 0 12 7"><path d="M1 1L6 6L11 1" fill="none" stroke="#3b3a39" stroke-width="2"/></svg>
<div class="t" style="left:2580.50px;top:1080.03px;font-size:36.00px;color:#3b3a39;transform-origin:0 50%;transform:scaleX(0.9375);">A</div>
<svg class="b" style="left:2602.00px;top:1085.00px;" width="11.00" height="7.00" viewBox="0 0 11 7"><path d="M1 6L5.500 1.500L10 6" fill="none" stroke="#2b7cd3" stroke-width="2.200"/></svg>
<div class="t" style="left:2633.00px;top:1086.80px;font-size:28.00px;color:#3b3a39;transform-origin:0 50%;transform:scaleX(1.0000);">A</div>
<svg class="b" style="left:2651.50px;top:1085.00px;" width="11.00" height="7.00" viewBox="0 0 11 7"><path d="M1 1L5.500 5.500L10 1" fill="none" stroke="#2b7cd3" stroke-width="2.200"/></svg>
<div class="t" style="left:2237.00px;top:1153.80px;font-size:28.00px;color:#252423;font-weight:700;transform-origin:0 50%;transform:scaleX(0.9706);">F</div>
<div class="t" style="left:2286.00px;top:1154.64px;font-size:27.00px;color:#252423;font-style:italic;transform-origin:0 50%;transform:scaleX(1.1667);">K</div>
<div class="t" style="left:2335.80px;top:1154.64px;font-size:27.00px;color:#252423;transform-origin:0 50%;transform:scaleX(1.0250);">U</div>
<div class="b" style="left:2335.00px;top:1182.50px;width:19.50px;height:2.20px;background:#252423;"></div>
<svg class="b" style="left:2379.00px;top:1168.50px;" width="12.00" height="7.00" viewBox="0 0 12 7"><path d="M1 1L6 6L11 1" fill="none" stroke="#3b3a39" stroke-width="2"/></svg>
<svg class="b" style="left:2423.00px;top:1152.00px;" width="32.00" height="36.00" viewBox="0 0 32 36"><path d="M1 1H31V30H1Z M16 1V30 M1 15.500H31" fill="none" stroke="#3b3a39" stroke-width="1.600" stroke-dasharray="2.200 2.200"/><path d="M0 33.500H32" stroke="#252423" stroke-width="2.600"/></svg>
<svg class="b" style="left:2473.00px;top:1168.50px;" width="12.00" height="7.00" viewBox="0 0 12 7"><path d="M1 1L6 6L11 1" fill="none" stroke="#3b3a39" stroke-width="2"/></svg>
<svg class="b" style="left:2517.00px;top:1150.00px;" width="33.00" height="37.00" viewBox="0 0 33 37"><path d="M11 5L24.500 15L15 25L4.500 15.500Z" fill="#fafafa" stroke="#3b3a39" stroke-width="2"/><path d="M11.500 11V3.500C11.500 0.500 16 0.500 16 3.500V8" fill="none" stroke="#3b3a39" stroke-width="1.800"/><path d="M24.500 12.500C28 14 29 18 27.500 22" fill="none" stroke="#2b7cd3" stroke-width="2.600"/><rect x="0" y="29.500" width="33" height="6.500" fill="#ffea00"/></svg>
<svg class="b" style="left:2566.50px;top:1168.50px;" width="12.00" height="7.00" viewBox="0 0 12 7"><path d="M1 1L6 6L11 1" fill="none" stroke="#3b3a39" stroke-width="2"/></svg>
<div class="t" style="left:2604.00px;top:1150.26px;font-size:31.00px;color:#3b3a39;transform-origin:0 50%;transform:scaleX(0.9762);">A</div>
<div class="b" style="left:2598.50px;top:1179.50px;width:32.50px;height:6.50px;background:#e81123;"></div>
<svg class="b" style="left:2648.00px;top:1168.50px;" width="12.00" height="7.00" viewBox="0 0 12 7"><path d="M1 1L6 6L11 1" fill="none" stroke="#3b3a39" stroke-width="2"/></svg>
<div class="t" style="left:2383.00px;top:1229.68px;font-size:22.00px;color:#4a4847;transform-origin:0 50%;transform:scaleX(1.0761);">Schriftart</div>
<svg class="b" style="left:2663.00px;top:1233.00px;" width="16.00" height="16.00" viewBox="0 0 16 16"><path d="M1 10V1H10 M4.500 4.500L15 15 M15 6.500V15H6.500" fill="none" stroke="#484644" stroke-width="2.100"/></svg>
<div class="b" style="left:2805.00px;top:1077.50px;width:47.00px;height:47.00px;background:#c8c6c4;border:1.500px solid #a19f9d;"></div>
<svg class="b" style="left:2712.00px;top:1076.00px;" width="29.00" height="32.00" viewBox="0 0 29 32"><path d="M0 8.5H29" stroke="#3b3a39" stroke-width="2.3"/><path d="M4 16H25" stroke="#3b3a39" stroke-width="2.3"/><path d="M0 23.5H29" stroke="#3b3a39" stroke-width="2.3"/></svg>
<svg class="b" style="left:2762.50px;top:1082.00px;" width="29.00" height="32.00" viewBox="0 0 29 32"><path d="M0 8.5H29" stroke="#3b3a39" stroke-width="2.3"/><path d="M4 16H25" stroke="#3b3a39" stroke-width="2.3"/><path d="M0 23.5H29" stroke="#3b3a39" stroke-width="2.3"/></svg>
<svg class="b" style="left:2813.50px;top:1089.00px;" width="29.00" height="32.00" viewBox="0 0 29 32"><path d="M0 8.5H29" stroke="#3b3a39" stroke-width="2.3"/><path d="M4 16H25" stroke="#3b3a39" stroke-width="2.3"/><path d="M0 23.5H29" stroke="#3b3a39" stroke-width="2.3"/></svg>
<svg class="b" style="left:2862.00px;top:1082.00px;" width="36.00" height="34.00" viewBox="0 0 36 34"><text x="0" y="22" font-size="20" font-family="Liberation Sans, sans-serif" fill="#3b3a39" transform="rotate(-45 10 18)">ab</text><path d="M10 32L33 9 M24 8.500H33.500V18" fill="none" stroke="#2b7cd3" stroke-width="2.200"/></svg>
<svg class="b" style="left:2905.00px;top:1097.50px;" width="12.00" height="7.00" viewBox="0 0 12 7"><path d="M1 1L6 6L11 1" fill="none" stroke="#3b3a39" stroke-width="2"/></svg>
<svg class="b" style="left:2983.00px;top:1082.00px;" width="33.00" height="36.00" viewBox="0 0 33 36"><text x="1" y="14" font-size="19" font-family="Liberation Sans, sans-serif" fill="#3b3a39">ab</text><text x="1" y="31" font-size="19" font-family="Liberation Sans, sans-serif" fill="#3b3a39">c</text><path d="M31 15V25H15 M21 19L15 25L21 31" fill="none" stroke="#2b7cd3" stroke-width="2.200"/></svg>
<svg class="b" style="left:2712.00px;top:1152.00px;" width="29.00" height="32.00" viewBox="0 0 29 32"><path d="M0 4.75H29" stroke="#3b3a39" stroke-width="2.3"/><path d="M0 12.25H21" stroke="#3b3a39" stroke-width="2.3"/><path d="M0 19.75H29" stroke="#3b3a39" stroke-width="2.3"/><path d="M0 27.25H21" stroke="#3b3a39" stroke-width="2.3"/></svg>
<svg class="b" style="left:2762.50px;top:1152.00px;" width="29.00" height="32.00" viewBox="0 0 29 32"><path d="M0 4.75H29" stroke="#3b3a39" stroke-width="2.3"/><path d="M4 12.25H25" stroke="#3b3a39" stroke-width="2.3"/><path d="M0 19.75H29" stroke="#3b3a39" stroke-width="2.3"/><path d="M4 27.25H25" stroke="#3b3a39" stroke-width="2.3"/></svg>
<svg class="b" style="left:2813.50px;top:1152.00px;" width="29.00" height="32.00" viewBox="0 0 29 32"><path d="M0 4.75H29" stroke="#3b3a39" stroke-width="2.3"/><path d="M8 12.25H29" stroke="#3b3a39" stroke-width="2.3"/><path d="M0 19.75H29" stroke="#3b3a39" stroke-width="2.3"/><path d="M8 27.25H29" stroke="#3b3a39" stroke-width="2.3"/></svg>
<svg class="b" style="left:2864.00px;top:1152.50px;" width="30.00" height="31.00" viewBox="0 0 30 31"><path d="M0 2H30 M14 11H30 M14 20H30 M0 29H30" stroke="#3b3a39" stroke-width="2"/><path d="M11 15.500H1 M5.500 11L1 15.500L5.500 20" fill="none" stroke="#2b7cd3" stroke-width="2"/></svg>
<svg class="b" style="left:2914.00px;top:1152.50px;" width="30.00" height="31.00" viewBox="0 0 30 31"><path d="M0 2H30 M14 11H30 M14 20H30 M0 29H30" stroke="#3b3a39" stroke-width="2"/><path d="M0 15.500H10 M5.500 11L10 15.500L5.500 20" fill="none" stroke="#2b7cd3" stroke-width="2"/></svg>
<svg class="b" style="left:2979.00px;top:1152.00px;" width="33.00" height="33.00" viewBox="0 0 33 33"><path d="M1 1H32V32H1Z M1 8H32 M1 25H32 M11.500 1V8 M21.500 1V8 M11.500 25V32 M21.500 25V32" fill="#fafafa" stroke="#3b3a39" stroke-width="2"/><path d="M6 16.500H27 M10 12.500L6 16.500L10 20.500 M23 12.500L27 16.500L23 20.500" fill="none" stroke="#2b7cd3" stroke-width="2.200"/></svg>
<svg class="b" style="left:3030.00px;top:1167.50px;" width="12.00" height="7.00" viewBox="0 0 12 7"><path d="M1 1L6 6L11 1" fill="none" stroke="#3b3a39" stroke-width="2"/></svg>
<div class="t" style="left:2801.50px;top:1229.68px;font-size:22.00px;color:#4a4847;transform-origin:0 50%;transform:scaleX(1.0621);">Ausrichtung</div>
<svg class="b" style="left:3047.50px;top:1233.00px;" width="16.00" height="16.00" viewBox="0 0 16 16"><path d="M1 10V1H10 M4.500 4.500L15 15 M15 6.500V15H6.500" fill="none" stroke="#484644" stroke-width="2.100"/></svg>
<div class="b" style="left:3089.50px;top:1062.00px;width:178.00px;height:45.00px;background:#fff;border:1.500px solid #c8c6c4;"></div>
<div class="t" style="left:3097.40px;top:1074.38px;font-size:24.00px;color:#252423;transform-origin:0 50%;transform:scaleX(0.9705);">Text</div>
<svg class="b" style="left:3247.80px;top:1082.17px;" width="11.40" height="6.65" viewBox="0 0 12 7"><path d="M1 1L6 6L11 1" fill="none" stroke="#3b3a39" stroke-width="2"/></svg>
<svg class="b" style="left:3094.00px;top:1122.00px;" width="36.00" height="30.00" viewBox="0 0 36 30"><rect x="1" y="2" width="32" height="18" fill="#fafafa" stroke="#3b3a39" stroke-width="2"/><circle cx="13" cy="11" r="4.500" fill="none" stroke="#3b3a39" stroke-width="1.800"/><path d="M19 10V24a7.500 3.200 0 0 0 15 0V10" fill="#fce3c4" stroke="#e8912d" stroke-width="2"/><ellipse cx="26.500" cy="10" rx="7.500" ry="3.200" fill="#fce3c4" stroke="#e8912d" stroke-width="2"/><path d="M19 17a7.500 3.200 0 0 0 15 0" fill="none" stroke="#e8912d" stroke-width="1.800"/></svg>
<svg class="b" style="left:3144.50px;top:1133.50px;" width="12.00" height="7.00" viewBox="0 0 12 7"><path d="M1 1L6 6L11 1" fill="none" stroke="#3b3a39" stroke-width="2"/></svg>
<div class="t" style="left:3177.00px;top:1116.41px;font-size:38.50px;color:#3b3a39;transform-origin:0 50%;transform:scaleX(0.9412);">%</div>
<div class="t" style="left:3226.70px;top:1122.45px;font-size:22.50px;color:#605e5c;transform-origin:0 50%;transform:scaleX(0.8947);">000</div>
<svg class="b" style="left:3094.00px;top:1166.00px;" width="34.00" height="40.00" viewBox="0 0 34 40"><path d="M19 12.500H2 M8 6.500L2 12.500L8 18.500" fill="none" stroke="#2b88d8" stroke-width="2.400"/><text x="18.500" y="17.500" font-size="20.500" font-family="Liberation Sans, sans-serif" fill="#3b3a39" lengthAdjust="spacingAndGlyphs" textLength="14">,0</text><text x="8" y="34" font-size="20.500" font-family="Liberation Sans, sans-serif" fill="#3b3a39" lengthAdjust="spacingAndGlyphs" textLength="24.500">,00</text></svg>
<svg class="b" style="left:3145.00px;top:1166.00px;" width="34.00" height="40.00" viewBox="0 0 34 40"><text x="7" y="17.500" font-size="20.500" font-family="Liberation Sans, sans-serif" fill="#3b3a39" lengthAdjust="spacingAndGlyphs" textLength="24.500">,00</text><path d="M1 29H18 M12 23L18 29L12 35" fill="none" stroke="#2b88d8" stroke-width="2.400"/><text x="18" y="34" font-size="20.500" font-family="Liberation Sans, sans-serif" fill="#3b3a39" lengthAdjust="spacingAndGlyphs" textLength="14">,0</text></svg>
<div class="t" style="left:3138.90px;top:1229.68px;font-size:22.00px;color:#4a4847;transform-origin:0 50%;transform:scaleX(1.0419);">Zahl</div>
<svg class="b" style="left:3260.00px;top:1233.00px;" width="16.00" height="16.00" viewBox="0 0 16 16"><path d="M1 10V1H10 M4.500 4.500L15 15 M15 6.500V15H6.500" fill="none" stroke="#484644" stroke-width="2.100"/></svg>
<svg class="b" style="left:3308.00px;top:1064.00px;" width="34.00" height="34.00" viewBox="0 0 34 34"><rect x="1" y="1" width="31" height="28" fill="#fafafa" stroke="#3b3a39" stroke-width="2"/><path d="M1 10.500H32 M1 20H32 M11.500 1V29 M22 1V29" stroke="#3b3a39" stroke-width="1.600"/><rect x="2" y="2" width="9" height="8" fill="#f1707b"/><rect x="12.500" y="11.500" width="9" height="8" fill="#f1707b"/><rect x="2" y="21" width="9" height="7.500" fill="#f1707b"/><rect x="12.500" y="21" width="9" height="7.500" fill="#f1707b"/></svg>
<svg class="b" style="left:3308.00px;top:1112.00px;" width="34.00" height="34.00" viewBox="0 0 34 34"><rect x="1" y="1" width="31" height="28" fill="#fafafa" stroke="#3b3a39" stroke-width="2"/><path d="M1 10.500H32 M1 20H32 M11.500 1V29 M22 1V29" stroke="#3b3a39" stroke-width="1.600"/><rect x="12.500" y="11.500" width="19" height="17" fill="#69afe5"/><path d="M4 32C8 30 10 27 13 24L29 8L32.500 11.500L17 27C14 30 10 32.500 4 32Z" fill="#fafafa" stroke="#3b3a39" stroke-width="1.800"/></svg>
<svg class="b" style="left:3308.00px;top:1160.00px;" width="34.00" height="34.00" viewBox="0 0 34 34"><rect x="1" y="1" width="31" height="28" fill="#fafafa" stroke="#3b3a39" stroke-width="2"/><path d="M1 10.500H32 M1 20H32 M11.500 1V29 M22 1V29" stroke="#3b3a39" stroke-width="1.600"/><rect x="5" y="5" width="26" height="23" fill="#69afe5"/><path d="M4 32C8 30 10 27 13 24L29 8L32.500 11.500L17 27C14 30 10 32.500 4 32Z" fill="#fafafa" stroke="#3b3a39" stroke-width="1.800"/></svg>
<div class="t" style="left:3347.90px;top:1070.08px;font-size:24.00px;color:#3b3a39;transform-origin:0 50%;transform:scaleX(1.0434);">Bedingte Formatierung</div>
<svg class="b" style="left:3610.90px;top:1078.85px;" width="10.80" height="6.30" viewBox="0 0 12 7"><path d="M1 1L6 6L11 1" fill="none" stroke="#3b3a39" stroke-width="2"/></svg>
<div class="t" style="left:3347.90px;top:1118.08px;font-size:24.00px;color:#3b3a39;transform-origin:0 50%;transform:scaleX(1.0434);">Als Tabelle formatieren</div>
<svg class="b" style="left:3610.90px;top:1126.85px;" width="10.80" height="6.30" viewBox="0 0 12 7"><path d="M1 1L6 6L11 1" fill="none" stroke="#3b3a39" stroke-width="2"/></svg>
<div class="t" style="left:3347.90px;top:1166.08px;font-size:24.00px;color:#3b3a39;transform-origin:0 50%;transform:scaleX(1.0578);">Zellenformatvorlagen</div>
<svg class="b" style="left:3593.60px;top:1174.85px;" width="10.80" height="6.30" viewBox="0 0 12 7"><path d="M1 1L6 6L11 1" fill="none" stroke="#3b3a39" stroke-width="2"/></svg>
<div class="t" style="left:3392.40px;top:1229.68px;font-size:22.00px;color:#4a4847;transform-origin:0 50%;transform:scaleX(1.0364);">Formatvorlagen</div>
<svg class="b" style="left:3681.50px;top:1061.00px;" width="34.00" height="34.00" viewBox="0 0 34 34"><rect x="1" y="4" width="31" height="26" fill="#fafafa" stroke="#3b3a39" stroke-width="2"/><path d="M1 12.500H32 M1 21.500H32 M11.500 4V30 M22 4V30" stroke="#3b3a39" stroke-width="1.600"/><rect x="12.500" y="8" width="19" height="13" fill="#69afe5" stroke="#2b7cd3" stroke-width="1.600"/><path d="M14 14.500H2 M6.500 10L2 14.500L6.500 19" fill="none" stroke="#2b7cd3" stroke-width="2"/></svg>
<svg class="b" style="left:3681.50px;top:1109.50px;" width="34.00" height="34.00" viewBox="0 0 34 34"><rect x="1" y="4" width="31" height="26" fill="#fafafa" stroke="#3b3a39" stroke-width="2"/><path d="M1 12.500H32 M1 21.500H32 M11.500 4V30 M22 4V30" stroke="#3b3a39" stroke-width="1.600"/><rect x="7" y="10" width="12" height="13" fill="#69afe5" stroke="#2b7cd3" stroke-width="1.600"/><path d="M21 10.500L32 22.500 M32 10.500L21 22.500" stroke="#e81123" stroke-width="2.200"/></svg>
<svg class="b" style="left:3681.50px;top:1158.00px;" width="34.00" height="34.00" viewBox="0 0 34 34"><rect x="1" y="4" width="31" height="26" fill="#fafafa" stroke="#3b3a39" stroke-width="2"/><path d="M1 12.500H32 M1 21.500H32 M11.500 4V30 M22 4V30" stroke="#3b3a39" stroke-width="1.600"/><rect x="8" y="10" width="18" height="14" fill="#69afe5" stroke="#2b7cd3" stroke-width="1.600"/><path d="M6 1.500H27 M6 -1V4 M27 -1V4" stroke="#2b7cd3" stroke-width="1.800"/></svg>
<div class="t" style="left:3722.00px;top:1070.08px;font-size:24.00px;color:#3b3a39;transform-origin:0 50%;transform:scaleX(1.0632);">Einfügen</div>
<div class="t" style="left:3722.00px;top:1118.08px;font-size:24.00px;color:#3b3a39;transform-origin:0 50%;transform:scaleX(0.9890);">Löschen</div>
<div class="t" style="left:3722.00px;top:1166.08px;font-size:24.00px;color:#3b3a39;transform-origin:0 50%;transform:scaleX(1.0395);">Format</div>
<div class="t" style="left:3741.40px;top:1229.68px;font-size:22.00px;color:#4a4847;transform-origin:0 50%;transform:scaleX(1.1333);">Zellen</div>
<div class="b" style="left:1725.00px;top:1256.00px;width:2081.00px;height:20.00px;background:linear-gradient(#d0cfce,#e3e3e3 60%,#e6e6e6);"></div>
<div class="b" style="left:1725.00px;top:1272.00px;width:2081.00px;height:120.00px;background:#e6e6e6;"></div>
<div class="b" style="left:1733.80px;top:1280.00px;width:213.50px;height:47.00px;background:#fff;border:1.500px solid #d4d4d4;"></div>
<div class="t" style="left:1743.00px;top:1291.49px;font-size:26.00px;color:#444;transform-origin:0 50%;transform:scaleX(0.9697);">C2</div>
<svg class="b" style="left:1926.00px;top:1301.00px;" width="11.00" height="7.00" viewBox="0 0 11 7"><path d="M0.500 0.500H10.500L5.500 6Z" fill="#605e5c"/></svg>
<div class="b" style="left:1975.50px;top:1293.50px;width:4.00px;height:4.00px;background:#b0b0b0;border-radius:50%;"></div>
<div class="b" style="left:1975.50px;top:1301.50px;width:4.00px;height:4.00px;background:#b0b0b0;border-radius:50%;"></div>
<div class="b" style="left:1975.50px;top:1309.50px;width:4.00px;height:4.00px;background:#b0b0b0;border-radius:50%;"></div>
<div class="b" style="left:2009.00px;top:1280.00px;width:229.00px;height:47.00px;background:#fff;border:1.500px solid #d4d4d4;"></div>
<svg class="b" style="left:2037.50px;top:1294.00px;" width="19.00" height="19.00" viewBox="0 0 19 19"><path d="M1 1L18 18 M18 1L1 18" stroke="#c0c0c0" stroke-width="2.200"/></svg>
<svg class="b" style="left:2111.00px;top:1293.00px;" width="24.00" height="20.00" viewBox="0 0 24 20"><path d="M1.500 11L8.500 18L22.500 1.500" fill="none" stroke="#c0c0c0" stroke-width="3"/></svg>
<div class="t" style="left:2187.00px;top:1289.45px;font-size:29.00px;color:#555;font-weight:700;font-style:italic;font-family:'Liberation Serif',serif;">f</div>
<div class="t" style="left:2198.00px;top:1298.92px;font-size:19.00px;color:#555;font-weight:700;font-style:italic;font-family:'Liberation Serif',serif;">x</div>
<div class="b" style="left:2244.60px;top:1280.00px;width:1600.00px;height:87.50px;background:#fff;border:1.500px solid #d4d4d4;"></div>
<div class="t" style="left:2268.00px;top:1290.64px;font-size:27.00px;color:#444;transform-origin:0 50%;transform:scaleX(1.0638);">240711-1158_1</div>
<div class="b" style="left:1725.00px;top:1389.00px;width:2081.00px;height:38.80px;background:#e6e6e6;"></div>
<div class="b" style="left:1725.00px;top:1427.80px;width:56.00px;height:460.00px;background:#e6e6e6;"></div>
<div class="b" style="left:1781.00px;top:1427.80px;width:2022.00px;height:460.00px;background:#fff;"></div>
<div class="b" style="left:2244.60px;top:1389.00px;width:340.40px;height:38.80px;background:#d2d2d2;"></div>
<div class="b" style="left:2244.60px;top:1424.80px;width:340.40px;height:3.00px;background:#217346;"></div>
<div class="b" style="left:1725.00px;top:1468.60px;width:56.00px;height:40.80px;background:#d2d2d2;"></div>
<div class="b" style="left:1778.00px;top:1468.60px;width:3.00px;height:40.80px;background:#217346;"></div>
<svg class="b" style="left:1744.50px;top:1394.00px;" width="33.00" height="32.00" viewBox="0 0 33 32"><path d="M32 1V31H1Z" fill="#b4b4b4"/></svg>
<div class="b" style="left:1725.00px;top:1427.30px;width:2081.00px;height:1.00px;background:#a0a0a0;"></div>
<div class="b" style="left:1780.20px;top:1389.00px;width:1.50px;height:38.80px;background:#c6c6c6;"></div>
<div class="b" style="left:1780.50px;top:1427.80px;width:1.00px;height:460.00px;background:#d0d0d0;"></div>
<div class="b" style="left:1934.70px;top:1389.00px;width:1.50px;height:38.80px;background:#c6c6c6;"></div>
<div class="b" style="left:1935.00px;top:1427.80px;width:1.00px;height:460.00px;background:#d0d0d0;"></div>
<div class="b" style="left:2243.80px;top:1389.00px;width:1.50px;height:38.80px;background:#c6c6c6;"></div>
<div class="b" style="left:2244.10px;top:1427.80px;width:1.00px;height:460.00px;background:#d0d0d0;"></div>
<div class="b" style="left:2584.20px;top:1389.00px;width:1.50px;height:38.80px;background:#c6c6c6;"></div>
<div class="b" style="left:2584.50px;top:1427.80px;width:1.00px;height:460.00px;background:#d0d0d0;"></div>
<div class="b" style="left:3066.90px;top:1389.00px;width:1.50px;height:38.80px;background:#c6c6c6;"></div>
<div class="b" style="left:3067.20px;top:1427.80px;width:1.00px;height:460.00px;background:#d0d0d0;"></div>
<div class="b" style="left:3428.60px;top:1389.00px;width:1.50px;height:38.80px;background:#c6c6c6;"></div>
<div class="b" style="left:3428.90px;top:1427.80px;width:1.00px;height:460.00px;background:#d0d0d0;"></div>
<div class="b" style="left:3609.40px;top:1389.00px;width:1.50px;height:38.80px;background:#c6c6c6;"></div>
<div class="b" style="left:3609.70px;top:1427.80px;width:1.00px;height:460.00px;background:#d0d0d0;"></div>
<div class="b" style="left:3718.20px;top:1389.00px;width:1.50px;height:38.80px;background:#c6c6c6;"></div>
<div class="b" style="left:3718.50px;top:1427.80px;width:1.00px;height:460.00px;background:#d0d0d0;"></div>
<div class="b" style="left:1780.20px;top:1427.80px;width:1.50px;height:460.00px;background:#b8b8b8;"></div>
<div class="b" style="left:1781.00px;top:1468.10px;width:2022.00px;height:1.00px;background:#d0d0d0;"></div>
<div class="b" style="left:1725.00px;top:1468.10px;width:56.00px;height:1.00px;background:#bdbdbd;"></div>
<div class="b" style="left:1781.00px;top:1508.90px;width:2022.00px;height:1.00px;background:#d0d0d0;"></div>
<div class="b" style="left:1725.00px;top:1508.90px;width:56.00px;height:1.00px;background:#bdbdbd;"></div>
<div class="b" style="left:1781.00px;top:1549.70px;width:2022.00px;height:1.00px;background:#d0d0d0;"></div>
<div class="b" style="left:1725.00px;top:1549.70px;width:56.00px;height:1.00px;background:#bdbdbd;"></div>
<div class="b" style="left:1781.00px;top:1590.50px;width:2022.00px;height:1.00px;background:#d0d0d0;"></div>
<div class="b" style="left:1725.00px;top:1590.50px;width:56.00px;height:1.00px;background:#bdbdbd;"></div>
<div class="b" style="left:1781.00px;top:1631.30px;width:2022.00px;height:1.00px;background:#d0d0d0;"></div>
<div class="b" style="left:1725.00px;top:1631.30px;width:56.00px;height:1.00px;background:#bdbdbd;"></div>
<div class="b" style="left:1781.00px;top:1672.10px;width:2022.00px;height:1.00px;background:#d0d0d0;"></div>
<div class="b" style="left:1725.00px;top:1672.10px;width:56.00px;height:1.00px;background:#bdbdbd;"></div>
<div class="b" style="left:1781.00px;top:1712.90px;width:2022.00px;height:1.00px;background:#d0d0d0;"></div>
<div class="b" style="left:1725.00px;top:1712.90px;width:56.00px;height:1.00px;background:#bdbdbd;"></div>
<div class="b" style="left:1781.00px;top:1753.70px;width:2022.00px;height:1.00px;background:#d0d0d0;"></div>
<div class="b" style="left:1725.00px;top:1753.70px;width:56.00px;height:1.00px;background:#bdbdbd;"></div>
<div class="b" style="left:1781.00px;top:1794.50px;width:2022.00px;height:1.00px;background:#d0d0d0;"></div>
<div class="b" style="left:1725.00px;top:1794.50px;width:56.00px;height:1.00px;background:#bdbdbd;"></div>
<div class="b" style="left:1781.00px;top:1835.30px;width:2022.00px;height:1.00px;background:#d0d0d0;"></div>
<div class="b" style="left:1725.00px;top:1835.30px;width:56.00px;height:1.00px;background:#bdbdbd;"></div>
<div class="b" style="left:1781.00px;top:1876.10px;width:2022.00px;height:1.00px;background:#d0d0d0;"></div>
<div class="b" style="left:1725.00px;top:1876.10px;width:56.00px;height:1.00px;background:#bdbdbd;"></div>
<div class="t" style="left:1858.25px;top:1397.44px;font-size:27.00px;color:#262626;transform:translateX(-50%);">A</div>
<div class="t" style="left:2090.05px;top:1397.44px;font-size:27.00px;color:#262626;transform:translateX(-50%);">B</div>
<div class="t" style="left:2414.80px;top:1397.44px;font-size:27.00px;color:#217346;transform:translateX(-50%);">C</div>
<div class="t" style="left:2826.35px;top:1397.44px;font-size:27.00px;color:#262626;transform:translateX(-50%);">D</div>
<div class="t" style="left:3248.55px;top:1397.44px;font-size:27.00px;color:#262626;transform:translateX(-50%);">E</div>
<div class="t" style="left:3519.80px;top:1397.44px;font-size:27.00px;color:#262626;transform:translateX(-50%);">F</div>
<div class="t" style="left:3664.60px;top:1397.44px;font-size:27.00px;color:#262626;transform:translateX(-50%);">G</div>
<div class="t" style="left:1752.50px;top:1437.02px;font-size:27.50px;color:#222;transform:translateX(-50%) scaleX(1.0333);">1</div>
<div class="t" style="left:1752.50px;top:1477.82px;font-size:27.50px;color:#217346;transform:translateX(-50%) scaleX(1.0333);">2</div>
<div class="t" style="left:1752.50px;top:1518.62px;font-size:27.50px;color:#222;transform:translateX(-50%) scaleX(1.0333);">3</div>
<div class="t" style="left:1752.50px;top:1559.42px;font-size:27.50px;color:#222;transform:translateX(-50%) scaleX(1.0333);">4</div>
<div class="t" style="left:1752.50px;top:1600.22px;font-size:27.50px;color:#222;transform:translateX(-50%) scaleX(1.0333);">5</div>
<div class="t" style="left:1752.50px;top:1641.02px;font-size:27.50px;color:#222;transform:translateX(-50%) scaleX(1.0333);">6</div>
<div class="t" style="left:1752.50px;top:1681.82px;font-size:27.50px;color:#222;transform:translateX(-50%) scaleX(1.0333);">7</div>
<div class="t" style="left:1752.50px;top:1722.62px;font-size:27.50px;color:#222;transform:translateX(-50%) scaleX(1.0333);">8</div>
<div class="t" style="left:1752.50px;top:1763.42px;font-size:27.50px;color:#222;transform:translateX(-50%) scaleX(1.0333);">9</div>
<div class="t" style="left:1752.50px;top:1804.22px;font-size:27.50px;color:#222;transform:translateX(-50%) scaleX(0.9516);">10</div>
<div class="t" style="left:1752.50px;top:1845.02px;font-size:27.50px;color:#222;transform:translateX(-50%) scaleX(1.0172);">11</div>
<div class="t" style="left:1787.00px;top:1437.02px;font-size:27.50px;color:#000;font-weight:700;transform-origin:0 50%;transform:scaleX(0.9583);">Stichtag</div>
<div class="t" style="left:1941.50px;top:1437.02px;font-size:27.50px;color:#000;font-weight:700;transform-origin:0 50%;transform:scaleX(1.0473);">Mietvertrag</div>
<div class="t" style="left:2250.60px;top:1437.02px;font-size:27.50px;color:#000;font-weight:700;transform-origin:0 50%;transform:scaleX(1.0165);">Mietsache</div>
<div class="t" style="left:2591.00px;top:1437.02px;font-size:27.50px;color:#000;font-weight:700;transform-origin:0 50%;transform:scaleX(0.9865);">Mietsachenbezeichnung</div>
<div class="t" style="left:3073.70px;top:1437.02px;font-size:27.50px;color:#000;font-weight:700;transform-origin:0 50%;transform:scaleX(1.0191);">vIBAN/IBAN</div>
<div class="t" style="left:3435.40px;top:1437.02px;font-size:27.50px;color:#000;font-weight:700;transform-origin:0 50%;transform:scaleX(1.0125);">Titel</div>
<div class="t" style="left:3616.20px;top:1437.02px;font-size:27.50px;color:#000;font-weight:700;transform-origin:0 50%;transform:scaleX(1.0105);">Anrede</div>
<div class="t" style="left:3725.00px;top:1437.02px;font-size:27.50px;color:#000;font-weight:700;transform-origin:0 50%;transform:scaleX(1.0125);">Hauptmieter</div>
<div class="t" style="left:1790.40px;top:1477.82px;font-size:27.50px;color:#000;transform-origin:0 50%;transform:scaleX(1.0232);">22.08.2024</div>
<div class="t" style="left:1941.50px;top:1477.82px;font-size:27.50px;color:#000;transform-origin:0 50%;transform:scaleX(1.0506);">240711-1158</div>
<div class="t" style="left:2250.60px;top:1477.82px;font-size:27.50px;color:#000;transform-origin:0 50%;transform:scaleX(1.0413);">240711-1158_1</div>
<div class="t" style="left:3073.70px;top:1477.82px;font-size:27.50px;color:#000;transform-origin:0 50%;transform:scaleX(1.0096);">DE86550104000006941510</div>
<div class="t" style="left:3616.20px;top:1477.82px;font-size:27.50px;color:#000;transform-origin:0 50%;transform:scaleX(1.0660);">Herr</div>
<div class="t" style="left:3725.00px;top:1477.82px;font-size:27.50px;color:#000;transform-origin:0 50%;transform:scaleX(1.0576);">Malte Sand</div>
<div class="t" style="left:1790.40px;top:1518.62px;font-size:27.50px;color:#000;transform-origin:0 50%;transform:scaleX(1.0232);">22.08.2024</div>
<div class="t" style="left:1941.50px;top:1518.62px;font-size:27.50px;color:#000;transform-origin:0 50%;transform:scaleX(1.0166);">241_0227_1651</div>
<div class="t" style="left:2250.60px;top:1518.62px;font-size:27.50px;color:#000;transform-origin:0 50%;transform:scaleX(1.0218);">241_0227_1651_2</div>
<div class="t" style="left:3073.70px;top:1518.62px;font-size:27.50px;color:#000;transform-origin:0 50%;transform:scaleX(1.0096);">DE54550104000006939467</div>
<div class="t" style="left:3616.20px;top:1518.62px;font-size:27.50px;color:#000;transform-origin:0 50%;transform:scaleX(0.9912);">Frau</div>
<div class="t" style="left:3725.00px;top:1518.62px;font-size:27.50px;color:#000;transform-origin:0 50%;transform:scaleX(1.0543);">Katrin Test</div>
<div class="t" style="left:1790.40px;top:1559.42px;font-size:27.50px;color:#000;transform-origin:0 50%;transform:scaleX(1.0232);">22.08.2024</div>
<div class="t" style="left:1941.50px;top:1559.42px;font-size:27.50px;color:#000;transform-origin:0 50%;transform:scaleX(1.0166);">241_0227_1653</div>
<div class="t" style="left:2250.60px;top:1559.42px;font-size:27.50px;color:#000;transform-origin:0 50%;transform:scaleX(1.0218);">241_0227_1653_1</div>
<div class="t" style="left:3073.70px;top:1559.42px;font-size:27.50px;color:#000;transform-origin:0 50%;transform:scaleX(1.0096);">DE65550104000007278866</div>
<div class="t" style="left:3616.20px;top:1559.42px;font-size:27.50px;color:#000;transform-origin:0 50%;transform:scaleX(1.0660);">Herr</div>
<div class="t" style="left:3725.00px;top:1559.42px;font-size:27.50px;color:#000;transform-origin:0 50%;transform:scaleX(1.0420);">Gerd Test</div>
<div class="t" style="left:1790.40px;top:1600.22px;font-size:27.50px;color:#000;transform-origin:0 50%;transform:scaleX(1.0232);">22.08.2024</div>
<div class="t" style="left:1941.50px;top:1600.22px;font-size:27.50px;color:#000;transform-origin:0 50%;transform:scaleX(1.0166);">241_0227_1653</div>
<div class="t" style="left:2250.60px;top:1600.22px;font-size:27.50px;color:#000;transform-origin:0 50%;transform:scaleX(1.0218);">241_0227_1653_2</div>
<div class="t" style="left:2591.00px;top:1600.22px;font-size:27.50px;color:#000;transform-origin:0 50%;transform:scaleX(0.9620);">Garage</div>
<div class="t" style="left:3073.70px;top:1600.22px;font-size:27.50px;color:#000;transform-origin:0 50%;transform:scaleX(1.0096);">DE02550104000007279418</div>
<div class="t" style="left:3616.20px;top:1600.22px;font-size:27.50px;color:#000;transform-origin:0 50%;transform:scaleX(1.0660);">Herr</div>
<div class="t" style="left:3725.00px;top:1600.22px;font-size:27.50px;color:#000;transform-origin:0 50%;transform:scaleX(1.0420);">Gerd Test</div>
<div class="t" style="left:1790.40px;top:1641.02px;font-size:27.50px;color:#000;transform-origin:0 50%;transform:scaleX(1.0232);">22.08.2024</div>
<div class="t" style="left:1941.50px;top:1641.02px;font-size:27.50px;color:#000;transform-origin:0 50%;transform:scaleX(1.0166);">241_0227_1653</div>
<div class="t" style="left:2250.60px;top:1641.02px;font-size:27.50px;color:#000;transform-origin:0 50%;transform:scaleX(1.0218);">241_0227_1653_3</div>
<div class="t" style="left:2591.00px;top:1641.02px;font-size:27.50px;color:#000;transform-origin:0 50%;transform:scaleX(0.9784);">Regal 234</div>
<div class="t" style="left:3073.70px;top:1641.02px;font-size:27.50px;color:#000;transform-origin:0 50%;transform:scaleX(1.0096);">DE43550104000007279456</div>
<div class="t" style="left:3616.20px;top:1641.02px;font-size:27.50px;color:#000;transform-origin:0 50%;transform:scaleX(1.0660);">Herr</div>
<div class="t" style="left:3725.00px;top:1641.02px;font-size:27.50px;color:#000;transform-origin:0 50%;transform:scaleX(1.0420);">Gerd Test</div>
<div class="t" style="left:1790.40px;top:1681.82px;font-size:27.50px;color:#000;transform-origin:0 50%;transform:scaleX(1.0232);">22.08.2024</div>
<div class="t" style="left:1941.50px;top:1681.82px;font-size:27.50px;color:#000;transform-origin:0 50%;transform:scaleX(1.0166);">241_0227_1653</div>
<div class="t" style="left:2250.60px;top:1681.82px;font-size:27.50px;color:#000;transform-origin:0 50%;transform:scaleX(1.0218);">241_0227_1653_4</div>
<div class="t" style="left:2591.00px;top:1681.82px;font-size:27.50px;color:#000;transform-origin:0 50%;transform:scaleX(0.9784);">Regal 137</div>
<div class="t" style="left:3073.70px;top:1681.82px;font-size:27.50px;color:#000;transform-origin:0 50%;transform:scaleX(1.0096);">DE64550104000007277623</div>
<div class="t" style="left:3616.20px;top:1681.82px;font-size:27.50px;color:#000;transform-origin:0 50%;transform:scaleX(1.0660);">Herr</div>
<div class="t" style="left:3725.00px;top:1681.82px;font-size:27.50px;color:#000;transform-origin:0 50%;transform:scaleX(1.0420);">Gerd Test</div>
<div class="t" style="left:1790.40px;top:1722.62px;font-size:27.50px;color:#000;transform-origin:0 50%;transform:scaleX(1.0232);">22.08.2024</div>
<div class="t" style="left:1941.50px;top:1722.62px;font-size:27.50px;color:#000;transform-origin:0 50%;transform:scaleX(1.0166);">241_0227_1653</div>
<div class="t" style="left:2250.60px;top:1722.62px;font-size:27.50px;color:#000;transform-origin:0 50%;transform:scaleX(1.0218);">241_0227_1653_5</div>
<div class="t" style="left:2591.00px;top:1722.62px;font-size:27.50px;color:#000;transform-origin:0 50%;transform:scaleX(0.9784);">Regal 069</div>
<div class="t" style="left:3073.70px;top:1722.62px;font-size:27.50px;color:#000;transform-origin:0 50%;transform:scaleX(1.0096);">DE09550104000007277740</div>
<div class="t" style="left:3616.20px;top:1722.62px;font-size:27.50px;color:#000;transform-origin:0 50%;transform:scaleX(1.0660);">Herr</div>
<div class="t" style="left:3725.00px;top:1722.62px;font-size:27.50px;color:#000;transform-origin:0 50%;transform:scaleX(1.0420);">Gerd Test</div>
<div class="t" style="left:1790.40px;top:1763.42px;font-size:27.50px;color:#000;transform-origin:0 50%;transform:scaleX(1.0232);">22.08.2024</div>
<div class="t" style="left:1941.50px;top:1763.42px;font-size:27.50px;color:#000;transform-origin:0 50%;transform:scaleX(1.0166);">241_0227_1653</div>
<div class="t" style="left:2250.60px;top:1763.42px;font-size:27.50px;color:#000;transform-origin:0 50%;transform:scaleX(1.0218);">241_0227_1653_6</div>
<div class="t" style="left:2591.00px;top:1763.42px;font-size:27.50px;color:#000;transform-origin:0 50%;transform:scaleX(0.9784);">Regal 576</div>
<div class="t" style="left:3073.70px;top:1763.42px;font-size:27.50px;color:#000;transform-origin:0 50%;transform:scaleX(1.0096);">DE46550104000007281633</div>
<div class="t" style="left:3616.20px;top:1763.42px;font-size:27.50px;color:#000;transform-origin:0 50%;transform:scaleX(1.0660);">Herr</div>
<div class="t" style="left:3725.00px;top:1763.42px;font-size:27.50px;color:#000;transform-origin:0 50%;transform:scaleX(1.0420);">Gerd Test</div>
<div class="t" style="left:1790.40px;top:1804.22px;font-size:27.50px;color:#000;transform-origin:0 50%;transform:scaleX(1.0232);">22.08.2024</div>
<div class="t" style="left:1941.50px;top:1804.22px;font-size:27.50px;color:#000;transform-origin:0 50%;transform:scaleX(1.0166);">241_0227_1655</div>
<div class="t" style="left:2250.60px;top:1804.22px;font-size:27.50px;color:#000;transform-origin:0 50%;transform:scaleX(1.0218);">241_0227_1655_1</div>
<div class="t" style="left:3073.70px;top:1804.22px;font-size:27.50px;color:#000;transform-origin:0 50%;transform:scaleX(1.0096);">DE16550104000007281688</div>
<div class="t" style="left:3616.20px;top:1804.22px;font-size:27.50px;color:#000;transform-origin:0 50%;transform:scaleX(0.9912);">Frau</div>
<div class="t" style="left:3725.00px;top:1804.22px;font-size:27.50px;color:#000;transform-origin:0 50%;transform:scaleX(1.0714);">Edeltraut Test</div>
<div class="t" style="left:1790.40px;top:1845.02px;font-size:27.50px;color:#000;transform-origin:0 50%;transform:scaleX(1.0232);">22.08.2024</div>
<div class="t" style="left:1941.50px;top:1845.02px;font-size:27.50px;color:#000;transform-origin:0 50%;transform:scaleX(1.0166);">241_0227_1655</div>
<div class="t" style="left:2250.60px;top:1845.02px;font-size:27.50px;color:#000;transform-origin:0 50%;transform:scaleX(1.0218);">241_0227_1655_2</div>
<div class="t" style="left:2591.00px;top:1845.02px;font-size:27.50px;color:#000;transform-origin:0 50%;transform:scaleX(0.9620);">Garage</div>
<div class="t" style="left:3073.70px;top:1845.02px;font-size:27.50px;color:#000;transform-origin:0 50%;transform:scaleX(1.0096);">DE13550104000006942533</div>
<div class="t" style="left:3616.20px;top:1845.02px;font-size:27.50px;color:#000;transform-origin:0 50%;transform:scaleX(0.9912);">Frau</div>
<div class="t" style="left:3725.00px;top:1845.02px;font-size:27.50px;color:#000;transform-origin:0 50%;transform:scaleX(1.0714);">Edeltraut Test</div>
<div class="b" style="left:2243.10px;top:1467.10px;width:343.40px;height:43.80px;border:3px solid #217346;"></div>
<div class="b" style="left:2580.00px;top:1504.40px;width:9.00px;height:9.00px;background:#217346;border:1.500px solid #fff;"></div>
</div></body></html>
